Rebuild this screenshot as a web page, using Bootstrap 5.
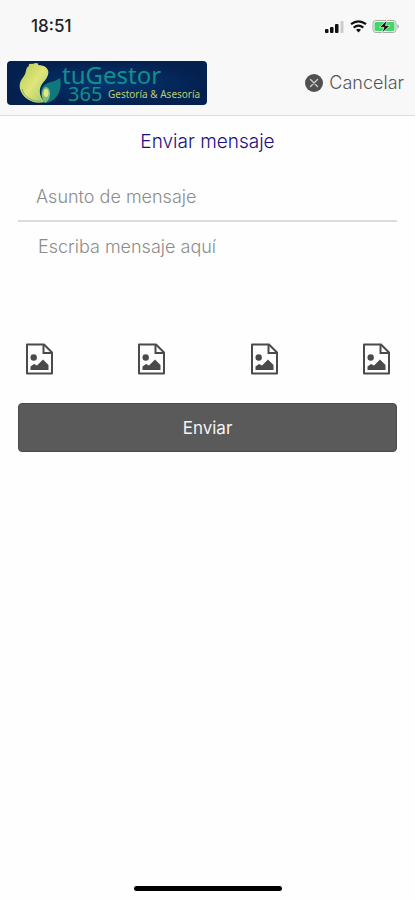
<!DOCTYPE html>
<html lang="es">
<head>
<meta charset="utf-8">
<meta name="viewport" content="width=device-width, initial-scale=1">
<title>Enviar mensaje</title>
<link href="https://cdn.jsdelivr.net/npm/bootstrap@5.3.0/dist/css/bootstrap.min.css" rel="stylesheet">
<style>
  body { font-family: Inter, "Liberation Sans", sans-serif; background: #fefefe; color: #555; }
  .app-header { background: #f8f8f8; border-bottom: 1px solid #dcdcdc; }
  .status-bar { height: 52px; padding: 0 15px 0 31px; color: #222; }
  .clock { font-size: 17px; font-weight: 500; line-height: 20px; }
  .brand-bar { height: 63px; padding: 0 11px 2px 7px; }
  .cancel-btn { font-size: 18px; line-height: 24px; font-weight: 300; color: #555; gap: 6px; }
  .page-title { font-size: 19px; line-height: 24px; font-weight: 300; color: #1c0f80; padding: 14px 0 20px; }
  .compose { padding: 0 18px; }
  .compose .form-control { font-size: 18px; line-height: 24px; font-weight: 300; border: 0; border-radius: 0; background: transparent; resize: none; padding: 11px 18px; }
  .compose .form-control::placeholder { color: #8c8c8c; opacity: 1; }
  .compose .subject { border-bottom: 2px solid #dcdcdc; }
  .compose .message { padding: 13px 20px; height: 121px; }
  .attachments { padding: 0 7px; margin-bottom: 28px; }
  .send-btn { background: #5a5a5a; border: 1px solid #4b4b4b; color: #f4f4f4; font-size: 17px; line-height: 24px; padding: 12px 12px 11px; border-radius: 4px; }
  .send-btn:hover { background: #4b4b4b; color: #fff; }
  .home-bar { width: 148px; height: 5px; background: #000; margin-bottom: 9px; }
  .logo-text { font-family: "Noto Sans", "Open Sans", sans-serif; }
</style>
<script src="https://cdn.jsdelivr.net/npm/bootstrap@5.3.0/dist/js/bootstrap.bundle.min.js" defer></script>
</head>
<body class="d-flex flex-column min-vh-100">
<svg class="d-none" aria-hidden="true">
  <symbol id="file-image" viewBox="0 0 28 32">
    <path d="M2 1.500H19L27 9.500V30.500H2Z" fill="none" stroke="#4a4a4a" stroke-width="2" stroke-linejoin="round"/>
    <path d="M18.500 2V10H26.500" fill="none" stroke="#4a4a4a" stroke-width="2"/>
    <circle cx="8.700" cy="14.500" r="3.200" fill="#4a4a4a"/>
    <path d="M5.500 27V23.500L9 21L12 22.500L18 16.500L23.500 22V27Z" fill="#4a4a4a"/>
  </symbol>
</svg>

<header class="app-header">
  <div class="status-bar d-flex align-items-center justify-content-between">
    <span class="clock">18:51</span>
    <svg width="75" height="16" viewBox="0 0 75 16" role="img" aria-label="Señal, wifi y batería">
      <g fill="#111">
        <rect x="0" y="11" width="3.500" height="4" rx="1"/>
        <rect x="5" y="9" width="3.500" height="6" rx="1"/>
        <rect x="10" y="6" width="3.500" height="9" rx="1"/>
        <rect x="15.500" y="3" width="3" height="12" rx="1" fill="#ccc"/>
      </g>
      <g fill="none" stroke="#111" stroke-width="2.200">
        <path d="M26 6.200Q33.500 .5 41 6.200"/>
        <path d="M28.700 9.600Q33.500 5.600 38.300 9.600"/>
      </g>
      <path d="M31 11.800Q33.500 9.800 36 11.800L33.500 14.500Z" fill="#111"/>
      <rect x="48" y="2.500" width="23" height="12" rx="3" fill="#f8f8f8" stroke="#aaa"/>
      <rect x="49.500" y="4" width="20" height="9" rx="1.500" fill="#45d668"/>
      <path d="M72.500 6Q75 8.500 72.500 11Z" fill="#999"/>
      <path d="M62 2L54.500 9.400H59L57 15L65 7.600H60.500Z" fill="#111" stroke="#f8f8f8" stroke-width=".7"/>
    </svg>
  </div>
  <div class="brand-bar d-flex align-items-center justify-content-between">
    <svg width="200" height="44" viewBox="0 0 200 44" role="img" aria-label="tuGestor 365 Gestoría &amp; Asesoría">
      <defs>
        <radialGradient id="navy"><stop offset="0" stop-color="#063671"/><stop offset="1" stop-color="#04204f"/></radialGradient>
        <linearGradient id="lime" x1="0" y1="0" x2="1" y2="1"><stop offset="0" stop-color="#b5cb52"/><stop offset=".5" stop-color="#dfe57a"/><stop offset="1" stop-color="#9fc66b"/></linearGradient>
      </defs>
      <rect width="200" height="44" rx="4" fill="url(#navy)"/>
      <path d="M22 5Q21 2 25 3L29 2Q32 2 31 4C38 4 43 8 41 14C39 20 34 22 33 28C32 34 35 38 38 41C27 44 16 38 13 28C12 22 14 19 17 15C20 11 18 7 22 5Z" fill="url(#lime)"/>
      <path d="M15 28C17 36 25 41 34 40" fill="none" stroke="#7dac60"/>
      <path d="M53 17C56 30 49 41 38 42C34 37 33 32 35 27C39 20 47 22 53 17Z" fill="#11777b"/>
      <path d="M38 42C34 37 34 31 37 27C40 24 44 29 43 34Q42 40 38 42Z" fill="#83bd7e"/>
      <ellipse cx="39" cy="32" rx="2.500" ry="4" fill="#e0e783"/>
      <g class="logo-text">
        <text x="55" y="23" font-size="24" fill="#129088">tuGestor</text>
        <text x="61" y="40" font-size="20" fill="#129088">365</text>
        <text x="101" y="37" font-size="10" fill="#b8cc73">Gestoría &amp; Asesoría</text>
      </g>
    </svg>
    <button type="button" class="cancel-btn btn p-0 border-0 d-inline-flex align-items-center">
      <svg width="18" height="18" viewBox="0 0 18 18" aria-hidden="true">
        <circle cx="9" cy="9" r="9" fill="#505050"/>
        <path d="M5.500 5.500L12.500 12.500M12.500 5.500L5.500 12.500" stroke="#d0d0d0" stroke-width="1.300" stroke-linecap="round"/>
      </svg>
      <span>Cancelar</span>
    </button>
  </div>
</header>

<main class="flex-grow-1">
  <h1 class="page-title text-center m-0">Enviar mensaje</h1>
  <form class="compose" onsubmit="return false">
    <input type="text" class="subject form-control" aria-label="Asunto de mensaje" placeholder="Asunto de mensaje">
    <textarea class="message form-control" aria-label="Mensaje" placeholder="Escriba mensaje aquí"></textarea>
    <div class="attachments d-flex justify-content-between">
      <button type="button" class="btn p-0 border-0 d-flex" aria-label="Adjuntar imagen 1"><svg width="28" height="32"><use href="#file-image"/></svg></button>
      <button type="button" class="btn p-0 border-0 d-flex" aria-label="Adjuntar imagen 2"><svg width="28" height="32"><use href="#file-image"/></svg></button>
      <button type="button" class="btn p-0 border-0 d-flex" aria-label="Adjuntar imagen 3"><svg width="28" height="32"><use href="#file-image"/></svg></button>
      <button type="button" class="btn p-0 border-0 d-flex" aria-label="Adjuntar imagen 4"><svg width="28" height="32"><use href="#file-image"/></svg></button>
    </div>
    <button type="submit" class="send-btn btn w-100">Enviar</button>
  </form>
</main>

<footer class="d-flex justify-content-center">
  <div class="home-bar rounded-pill"></div>
</footer>
</body>
</html>
